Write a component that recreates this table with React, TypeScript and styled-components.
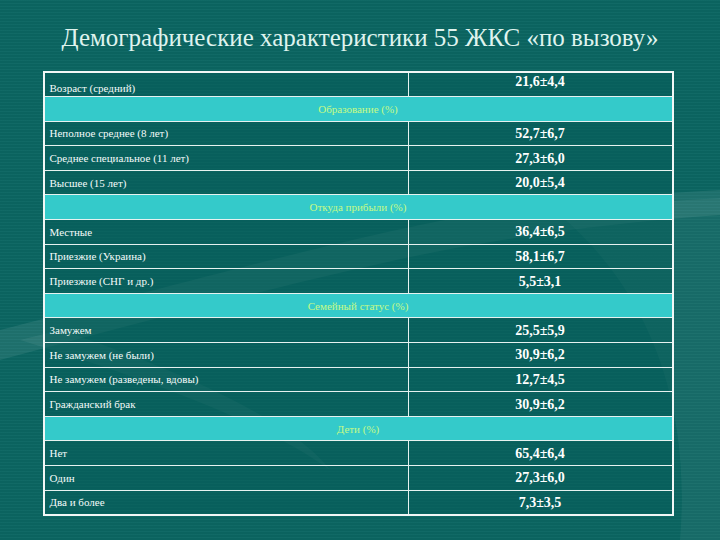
import React from 'react';
import styled, { createGlobalStyle } from 'styled-components';

const serif = `"Liberation Serif", "Times New Roman", serif`;

const GlobalStyle = createGlobalStyle`
  html, body {
    margin: 0;
    padding: 0;
    background: #0b6662;
  }
  body {
    font-family: ${serif};
  }
`;

const Slide = styled.div`
  position: relative;
  width: 720px;
  height: 540px;
  overflow: hidden;
  background-color: #0b6662;
  background-image: repeating-linear-gradient(
    to bottom,
    rgba(255, 255, 255, 0.025) 0px,
    rgba(255, 255, 255, 0.025) 1px,
    rgba(0, 0, 0, 0.03) 1px,
    rgba(0, 0, 0, 0.03) 3px
  );
  display: flex;
  flex-direction: column;
  align-items: center;
  box-sizing: border-box;
  padding-top: 23px;
`;

const Swoosh = styled.svg`
  position: absolute;
  left: 0;
  top: 0;
  width: 720px;
  height: 540px;
  pointer-events: none;
`;

const Title = styled.h1`
  position: relative;
  margin: 0;
  font-family: ${serif};
  font-weight: normal;
  font-size: 25px;
  line-height: 30px;
  color: #dff3ee;
`;

const Table = styled.table`
  position: relative;
  margin-top: 18px;
  margin-left: -4px;
  width: 631px;
  border-collapse: collapse;
  border: 2px solid #f2f7f6;
  table-layout: fixed;
  font-family: ${serif};
`;

const Row = styled.tr`
  height: 24.6px;
`;

const Label = styled.td<{ $first?: boolean }>`
  width: 358px;
  padding: ${(p) => (p.$first ? '6px 0 0 5px' : '0 0 0 5px')};
  border: 1px solid #e6f2f0;
  background: rgba(8, 92, 89, 0.55);
  color: #f4fbfa;
  font-size: 11px;
  vertical-align: middle;
`;

const Value = styled.td<{ $first?: boolean }>`
  padding: ${(p) => (p.$first ? '0 0 6px 0' : '1px 0 0 0')};
  border: 1px solid #e6f2f0;
  background: rgba(8, 92, 89, 0.55);
  color: #ffffff;
  font-size: 14px;
  font-weight: bold;
  text-align: center;
  vertical-align: middle;
`;

const Section = styled.td`
  border: 1px solid #e6f2f0;
  background: #34caca;
  color: #c6fa86;
  font-size: 11px;
  text-align: center;
  vertical-align: middle;
`;

type Item = { label: string; value: string };
type Group = { title?: string; items: Item[] };

const groups: Group[] = [
  { items: [{ label: 'Возраст (средний)', value: '21,6±4,4' }] },
  {
    title: 'Образование (%)',
    items: [
      { label: 'Неполное среднее (8 лет)', value: '52,7±6,7' },
      { label: 'Среднее специальное (11 лет)', value: '27,3±6,0' },
      { label: 'Высшее (15 лет)', value: '20,0±5,4' },
    ],
  },
  {
    title: 'Откуда прибыли (%)',
    items: [
      { label: 'Местные', value: '36,4±6,5' },
      { label: 'Приезжие (Украина)', value: '58,1±6,7' },
      { label: 'Приезжие (СНГ и др.)', value: '5,5±3,1' },
    ],
  },
  {
    title: 'Семейный статус (%)',
    items: [
      { label: 'Замужем', value: '25,5±5,9' },
      { label: 'Не замужем (не были)', value: '30,9±6,2' },
      { label: 'Не замужем (разведены, вдовы)', value: '12,7±4,5' },
      { label: 'Гражданский брак', value: '30,9±6,2' },
    ],
  },
  {
    title: 'Дети (%)',
    items: [
      { label: 'Нет', value: '65,4±6,4' },
      { label: 'Один', value: '27,3±6,0' },
      { label: 'Два и более', value: '7,3±3,5' },
    ],
  },
];

export default function App() {
  return (
    <>
      <GlobalStyle />
      <Slide>
        <Swoosh viewBox="0 0 720 540">
          <path
            d="M0 330 C 120 300, 300 250, 420 225 C 520 205, 620 195, 720 190 L 720 215 C 620 222, 520 235, 420 255 C 300 280, 150 320, 0 360 Z"
            fill="rgba(255,255,255,0.08)"
          />
          <path
            d="M20 340 C 150 380, 260 420, 330 470 C 300 430, 210 380, 60 330 Z"
            fill="rgba(255,255,255,0.06)"
          />
          <path
            d="M560 215 C 620 205, 680 200, 720 198 L 720 540 L 680 540 C 690 420, 660 300, 560 215 Z"
            fill="rgba(255,255,255,0.05)"
          />
        </Swoosh>
        <Title>Демографические характеристики 55 ЖКС «по вызову»</Title>
        <Table>
          <tbody>
            {groups.map((g, gi) => (
              <React.Fragment key={gi}>
                {g.title && (
                  <Row>
                    <Section colSpan={2}>{g.title}</Section>
                  </Row>
                )}
                {g.items.map((it, ii) => (
                  <Row key={ii}>
                    <Label $first={gi === 0}>{it.label}</Label>
                    <Value $first={gi === 0}>{it.value}</Value>
                  </Row>
                ))}
              </React.Fragment>
            ))}
          </tbody>
        </Table>
      </Slide>
    </>
  );
}
